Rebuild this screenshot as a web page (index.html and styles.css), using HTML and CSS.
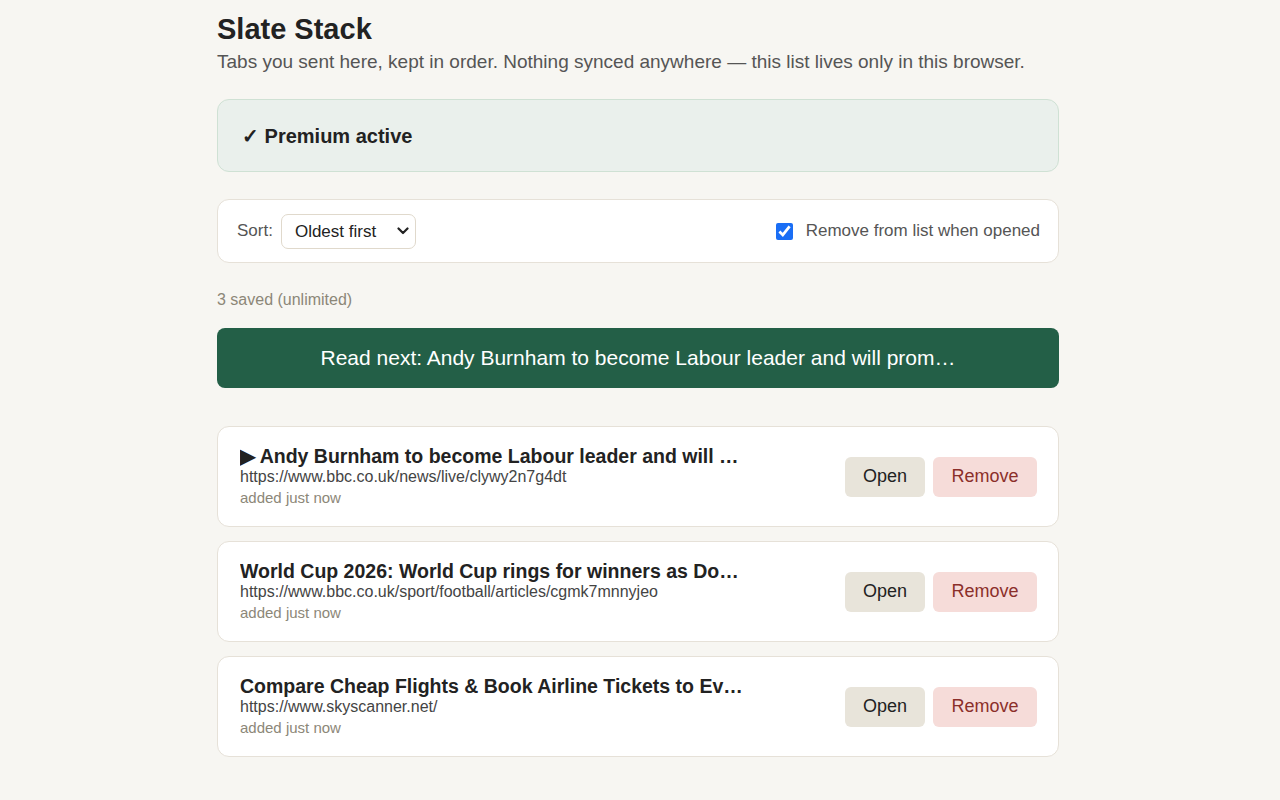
FILE: index.html
```html
<!DOCTYPE html>
<html>
<head>
    <title>Slate Stack</title>
    <link rel="stylesheet" href="styles.css">
</head>
<body>
    <div id="page">
        <h1>Slate Stack</h1>
        <p class="lead">Tabs you sent here, kept in order. Nothing synced anywhere — this list lives only in this browser.</p>

        <div class="premium">✓ Premium active</div>

        <div class="controls">
            <label class="sort">
                Sort:
                <select id="sortSelect">
                    <option>Oldest first</option>
                    <option>Newest first</option>
                </select>
            </label>
            <label class="auto-remove">
                <input type="checkbox" id="removeOnOpen" checked>
                Remove from list when opened
            </label>
        </div>

        <div class="count">3 saved (unlimited)</div>

        <button id="readNext">Read next: Andy Burnham to become Labour leader and will prom…</button>

        <ul id="list">
            <li class="item">
                <div class="info">
                    <div class="title">▶ Andy Burnham to become Labour leader and will …</div>
                    <div class="url">https://www.bbc.co.uk/news/live/clywy2n7g4dt</div>
                    <div class="meta">added just now</div>
                </div>
                <div class="actions">
                    <button class="btn open">Open</button>
                    <button class="btn remove">Remove</button>
                </div>
            </li>
            <li class="item">
                <div class="info">
                    <div class="title">World Cup 2026: World Cup rings for winners as Do…</div>
                    <div class="url">https://www.bbc.co.uk/sport/football/articles/cgmk7mnnyjeo</div>
                    <div class="meta">added just now</div>
                </div>
                <div class="actions">
                    <button class="btn open">Open</button>
                    <button class="btn remove">Remove</button>
                </div>
            </li>
            <li class="item">
                <div class="info">
                    <div class="title">Compare Cheap Flights &amp; Book Airline Tickets to Ev…</div>
                    <div class="url">https://www.skyscanner.net/</div>
                    <div class="meta">added just now</div>
                </div>
                <div class="actions">
                    <button class="btn open">Open</button>
                    <button class="btn remove">Remove</button>
                </div>
            </li>
        </ul>
    </div>
</body>
</html>
```

FILE: styles.css
```css
body {
    margin: 0;
    padding: 0 4px 0 0;
    background: #f7f6f2;
    color: #222;
    font-family: "Liberation Sans", Arial, Helvetica, sans-serif;
}

#page {
    width: 842px;
    margin: 0 auto;
    padding: 12px 0 40px;
}

h1 {
    font-size: 29px;
    margin: 0;
    line-height: 34px;
    color: #222;
}

.lead {
    font-size: 19px;
    color: #555;
    margin: 5px 0 0;
    line-height: 22px;
}

.premium {
    margin-top: 26px;
    height: 71px;
    padding: 0 24px;
    display: flex;
    align-items: center;
    background: #eaf0ec;
    border: 1px solid #cfe1d4;
    border-radius: 12px;
    font-size: 20px;
    font-weight: bold;
}

.controls {
    margin-top: 27px;
    height: 62px;
    padding: 0 18px 0 19px;
    display: flex;
    align-items: center;
    justify-content: space-between;
    background: #fff;
    border: 1px solid #e6e1d8;
    border-radius: 12px;
    font-size: 17px;
    color: #555;
}

.sort {
    display: flex;
    align-items: center;
    gap: 8px;
}

.sort select {
    appearance: none;
    -webkit-appearance: none;
    height: 35px;
    width: 135px;
    padding: 0 12px 0 13px;
    font-family: inherit;
    font-size: 17px;
    color: #222;
    background: #fff url("data:image/svg+xml,%3Csvg xmlns='http://www.w3.org/2000/svg' width='12' height='8' viewBox='0 0 12 8'%3E%3Cpath d='M1.5 1.5l4.5 4.5 4.5-4.5' fill='none' stroke='%23222' stroke-width='2.2' stroke-linecap='round' stroke-linejoin='round'/%3E%3C/svg%3E") no-repeat right 6px center;
    border: 1px solid #e0d9cc;
    border-radius: 7px;
}

.auto-remove {
    display: flex;
    align-items: center;
    gap: 13px;
}

.auto-remove input {
    width: 17px;
    height: 17px;
    margin: 0;
    accent-color: #1a6ef5;
}

.count {
    margin-top: 28px;
    font-size: 16px;
    color: #8c8778;
}

#readNext {
    display: block;
    width: 100%;
    height: 60px;
    margin-top: 19px;
    padding: 0 20px;
    border: 0;
    border-radius: 8px;
    background: #235f47;
    color: #fff;
    font-family: inherit;
    font-size: 21px;
    white-space: nowrap;
    overflow: hidden;
    text-overflow: ellipsis;
}

#list {
    list-style: none;
    margin: 38px 0 0;
    padding: 0;
    display: flex;
    flex-direction: column;
    gap: 14px;
}

.item {
    height: 99px;
    padding: 0 21px 0 22px;
    display: flex;
    align-items: center;
    justify-content: space-between;
    background: #fff;
    border: 1px solid #e6e1d8;
    border-radius: 12px;
}

.info {
    min-width: 0;
}

.title {
    font-size: 19.5px;
    font-weight: bold;
    line-height: 22px;
    max-width: 530px;
    white-space: nowrap;
    overflow: hidden;
    text-overflow: ellipsis;
}

.url {
    font-size: 16px;
    color: #444;
    line-height: 20px;
}

.meta {
    font-size: 15px;
    color: #8c8778;
    line-height: 22px;
}

.actions {
    display: flex;
    gap: 8px;
}

.btn {
    height: 40px;
    border: 0;
    border-radius: 6px;
    font-family: inherit;
    font-size: 18px;
}

.btn.open {
    width: 80px;
    background: #e8e4da;
    color: #222;
}

.btn.remove {
    width: 104px;
    background: #f6dcd9;
    color: #8b2f2a;
}
```
